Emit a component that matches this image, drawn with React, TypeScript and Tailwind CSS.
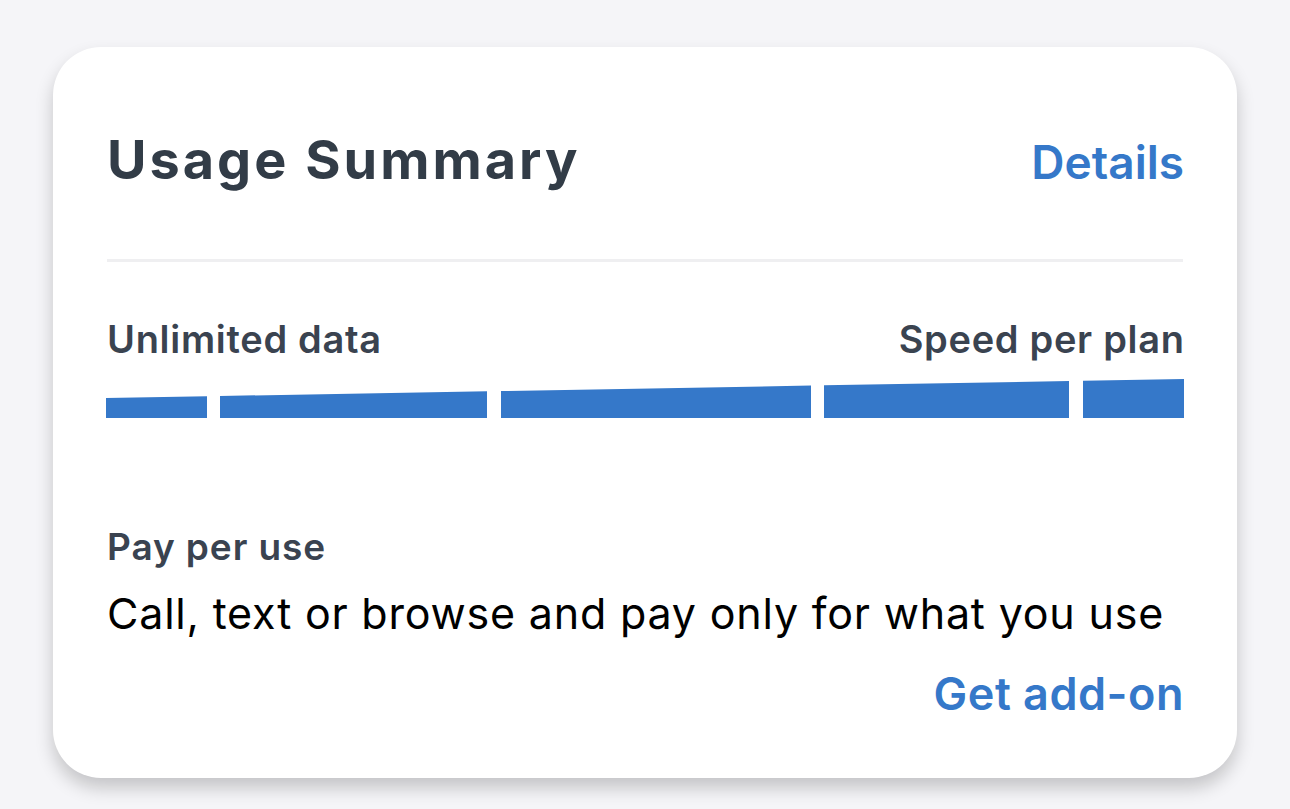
const segments = [
  { x: 0, w: 101 },
  { x: 114, w: 267 },
  { x: 395, w: 310 },
  { x: 718, w: 245 },
  { x: 977, w: 101 },
];

const TOTAL = 1078;
const H = 40;
// top edge rises linearly from left to right
const topAt = (x: number) => 20 - (19 * x) / TOTAL;

function UsageBars() {
  return (
    <svg width={TOTAL} height={H} viewBox={`0 0 ${TOTAL} ${H}`} className="block -ml-px">
      {segments.map((s) => (
        <polygon
          key={s.x}
          fill="#3578c9"
          points={`${s.x},${H} ${s.x},${topAt(s.x)} ${s.x + s.w},${topAt(s.x + s.w)} ${s.x + s.w},${H}`}
        />
      ))}
    </svg>
  );
}

export default function App() {
  return (
    <div className="min-h-[809px] bg-[#f5f5f8] pt-[47px] pl-[53px] font-['Inter',sans-serif]">
      <div className="w-[1184px] h-[731px] bg-white rounded-[48px] shadow-[0_10px_18px_rgba(0,0,0,0.2)] pl-[54px] pr-[53px] pt-[86px]">
        <div className="flex items-baseline justify-between">
          <h1 className="text-[54px] leading-none font-bold tracking-[3px] text-[#323c47]">Usage Summary</h1>
          <a className="text-[46px] leading-none font-semibold text-[#3578c9]">Details</a>
        </div>

        <div className="mt-[72px] mr-px h-[3px] bg-[#efeff1]" />

        <div className="mt-[58px] flex justify-between text-[38px] leading-none font-semibold tracking-[0.7px] text-[#3a4350]">
          <span>Unlimited data</span>
          <span className="-mr-[0.7px]">Speed per plan</span>
        </div>

        <div className="mt-[20px]">
          <UsageBars />
        </div>

        <p className="mt-[110px] text-[37px] leading-none font-semibold tracking-[0.9px] text-[#3a4350]">Pay per use</p>
        <p className="mt-[27px] text-[43px] leading-none tracking-[0.8px] text-black">
          Call, text or browse and pay only for what you use
        </p>
        <div className="mt-[36px] flex justify-end">
          <a className="text-[45px] leading-none font-semibold tracking-[0.5px] text-[#3578c9]">Get add-on</a>
        </div>
      </div>
    </div>
  );
}
